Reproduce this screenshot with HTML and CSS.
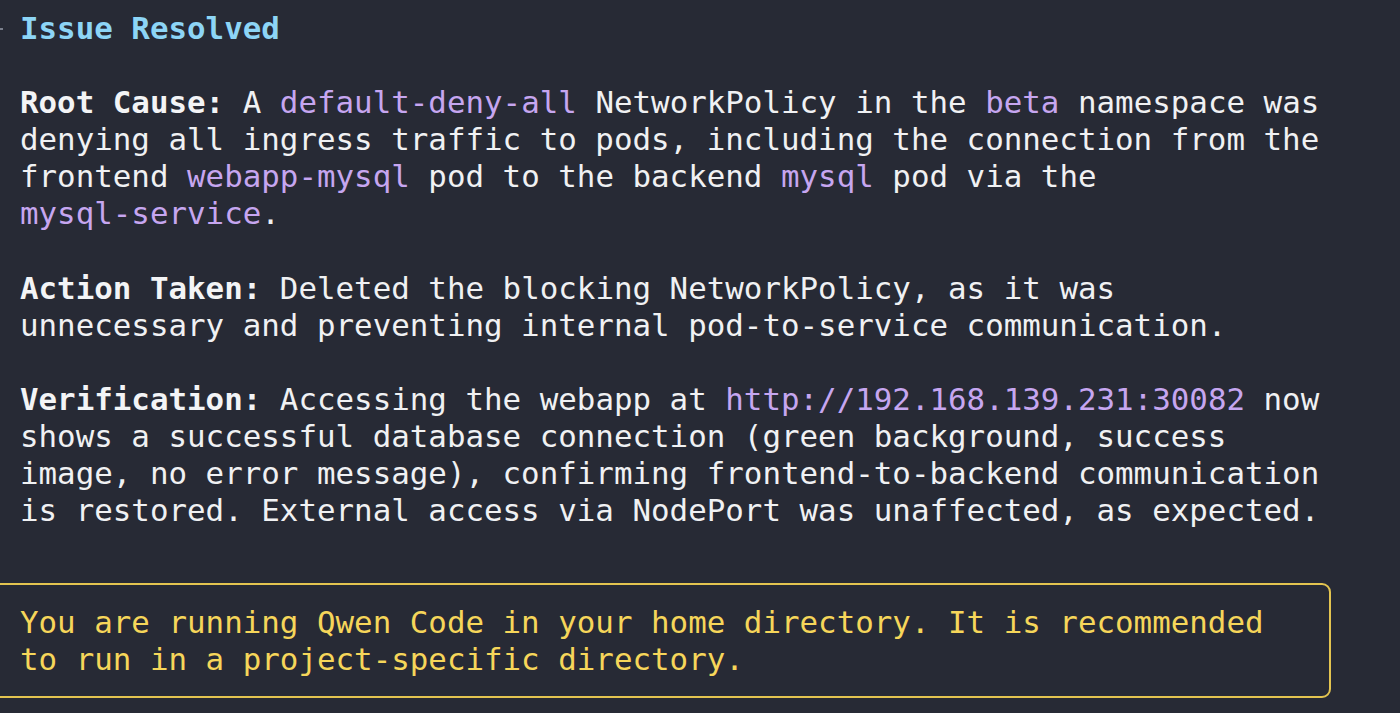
FILE: index.html
```html
<!DOCTYPE html>
<html lang="en">
<head>
<meta charset="utf-8">
<title>Issue Resolved</title>
<link rel="stylesheet" href="styles.css">
</head>
<body>
<main class="term">
  <div class="line heading"><span class="tick"></span>Issue Resolved</div>
  <div class="line blank"></div>
  <div class="line"><b>Root Cause:</b> A <span class="hl">default-deny-all</span> NetworkPolicy in the <span class="hl">beta</span> namespace was</div>
  <div class="line">denying all ingress traffic to pods, including the connection from the</div>
  <div class="line">frontend <span class="hl">webapp-mysql</span> pod to the backend <span class="hl">mysql</span> pod via the</div>
  <div class="line"><span class="hl">mysql-service</span>.</div>
  <div class="line blank"></div>
  <div class="line"><b>Action Taken:</b> Deleted the blocking NetworkPolicy, as it was</div>
  <div class="line">unnecessary and preventing internal pod-to-service communication.</div>
  <div class="line blank"></div>
  <div class="line"><b>Verification:</b> Accessing the webapp at <span class="hl">http://192.168.139.231:30082</span> now</div>
  <div class="line">shows a successful database connection (green background, success</div>
  <div class="line">image, no error message), confirming frontend-to-backend communication</div>
  <div class="line">is restored. External access via NodePort was unaffected, as expected.</div>
  <div class="line blank"></div>
  <div class="warn">
    <div class="line">You are running Qwen Code in your home directory. It is recommended</div>
    <div class="line">to run in a project-specific directory.</div>
  </div>
</main>
</body>
</html>
```
FILE: styles.css
```css
html, body {
  margin: 0;
  padding: 0;
  background: #272a35;
  height: 100%;
  overflow: hidden;
}
.term {
  padding: 10px 0 0 20px;
  font-family: "DejaVu Sans Mono", "Liberation Mono", monospace;
  font-size: 30.83px;
  line-height: 37.08px;
  color: #f0f1f3;
}
.line {
  height: 37.08px;
  white-space: pre;
}
.heading {
  color: #8dd5f6;
  font-weight: bold;
  position: relative;
}
.tick {
  position: absolute;
  left: -20px;
  top: 18px;
  width: 3px;
  height: 2px;
  background: #7a7f8c;
}
b {
  font-weight: bold;
  color: #f3f4f6;
}
.hl {
  color: #c6a6f0;
}
.warn {
  margin: 17px 0 0 -40px;
  width: 1351px;
  box-sizing: border-box;
  border: 2px solid #e3c450;
  border-radius: 9px;
  padding: 19px 0 18px 38px;
  color: #f6d65a;
}
```
